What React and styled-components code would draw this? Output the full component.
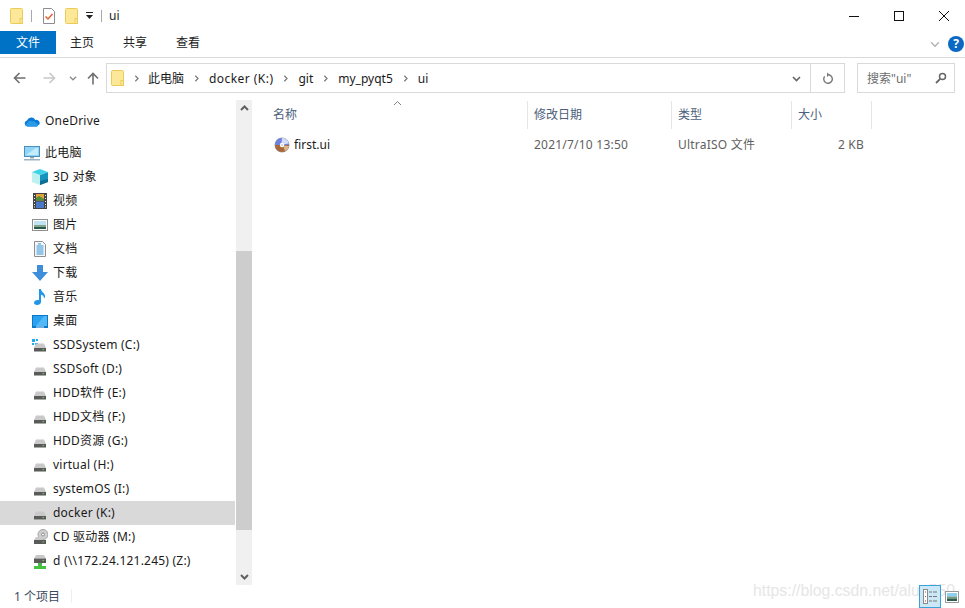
import React from "react";
import styled, { createGlobalStyle } from "styled-components";

const GlobalStyle = createGlobalStyle`
  html, body {
    margin: 0;
    padding: 0;
    background: #fff;
  }
  body {
    font-family: "Noto Sans", "Noto Sans CJK SC", sans-serif;
    font-size: 12px;
    color: #1a1a1a;
  }
`;

const Window = styled.div`
  width: 965px;
  height: 608px;
  display: flex;
  flex-direction: column;
  overflow: hidden;
  position: relative;
  background: #fff;
`;

const TitleBar = styled.div`
  height: 31px;
  display: flex;
  align-items: center;
  padding-left: 10px;
`;

const QuickIcon = styled.div`
  display: flex;
  margin-right: ${p => p.$gap || 0}px;
`;

const TitleSep = styled.div`
  width: 1px;
  height: 12px;
  background: #a8a8a8;
  margin-right: ${p => p.$gap}px;
`;

const TitleText = styled.span`
  font-size: 12px;
`;

const WinControls = styled.div`
  margin-left: auto;
  display: flex;
  align-items: center;
  padding-right: 16px;
  gap: 35px;
  height: 100%;
`;

const TabBar = styled.div`
  height: 26px;
  display: flex;
  align-items: flex-start;
  border-bottom: 1px solid #dadada;
`;

const Tab = styled.div`
  height: 23px;
  line-height: 24px;
  width: ${p => (p.$active ? 56 : 53)}px;
  padding-left: ${p => (p.$active ? 16 : 0)}px;
  box-sizing: border-box;
  background: ${p => (p.$active ? "#0072c6" : "transparent")};
  color: ${p => (p.$active ? "#fff" : "#222")};
  ${p => p.$first && "margin-left: 14px;"}
`;

const TabRight = styled.div`
  margin-left: auto;
  height: 26px;
  display: flex;
  align-items: center;
  gap: 8px;
  padding-right: 1px;
`;

const HelpIcon = styled.div`
  width: 16px;
  height: 16px;
  border-radius: 50%;
  background: #0b69c4;
  color: #fff;
  font-weight: 700;
  font-size: 12px;
  line-height: 16px;
  text-align: center;
`;

const AddressRow = styled.div`
  height: 30px;
  margin-top: 5px;
  display: flex;
  align-items: center;
  padding-right: 10px;
`;

const NavButtons = styled.div`
  width: 106px;
  height: 100%;
  flex: none;
  display: flex;
  align-items: center;
  padding-left: 13px;
  box-sizing: border-box;
`;

const NavBtn = styled.div`
  display: flex;
  margin-right: ${p => p.$gap}px;
`;

const AddressBox = styled.div`
  width: 739px;
  flex: none;
  height: 100%;
  box-sizing: border-box;
  border: 1px solid #d9d9d9;
  display: flex;
  align-items: center;
  padding-left: 4px;
`;

const Crumb = styled.span`
  margin-right: 9px;
  color: #1a1a1a;
  letter-spacing: ${p => (p.$wide ? 0.45 : 0)}px;
`;

const CrumbArrow = styled.span`
  display: flex;
  margin-right: ${p => (p.$first ? 8 : 9)}px;
`;

const AddressEnd = styled.div`
  margin-left: auto;
  display: flex;
  align-items: center;
  height: 100%;
`;

const DropBtn = styled.div`
  width: 27px;
  height: 100%;
  display: flex;
  align-items: center;
  justify-content: center;
`;

const RefreshBtn = styled.div`
  width: 34px;
  height: 100%;
  box-sizing: border-box;
  display: flex;
  align-items: center;
  justify-content: center;
  border-left: 1px solid #d9d9d9;
`;

const SearchBox = styled.div`
  width: 98px;
  height: 100%;
  margin-left: 12px;
  box-sizing: border-box;
  border: 1px solid #d9d9d9;
  display: flex;
  align-items: center;
  padding: 0 7px 0 9px;
  color: #6d6d6d;
  justify-content: space-between;
`;

const Main = styled.div`
  flex: 1;
  min-height: 0;
  margin-top: 7px;
  display: flex;
`;

const Sidebar = styled.div`
  width: 236px;
  flex: none;
  padding-top: 9px;
  box-sizing: border-box;
`;

const NavRow = styled.div`
  height: 24px;
  width: 235px;
  display: flex;
  align-items: center;
  box-sizing: border-box;
  padding-left: ${p => (p.$top ? 24 : 32)}px;
  margin-top: ${p => p.$gapTop || 0}px;
  background: ${p => (p.$selected ? "#d9d9d9" : "transparent")};
`;

const NavIcon = styled.div`
  width: 16px;
  height: 16px;
  display: flex;
  align-items: center;
  justify-content: center;
  margin-right: 5px;
  flex: none;
`;

const NavLabel = styled.span`
  padding-bottom: 2px;
  letter-spacing: 0.22px;
`;

const ScrollBar = styled.div`
  width: 16px;
  flex: none;
  background: #f0f0f0;
  display: flex;
  flex-direction: column;
`;

const ScrollBtn = styled.div`
  height: 17px;
  display: flex;
  align-items: center;
  justify-content: center;
  flex: none;
`;

const ScrollSpace = styled.div`
  height: ${p => p.$h}px;
  flex: none;
  background: ${p => (p.$thumb ? "#cdcdcd" : "transparent")};
`;

const Content = styled.div`
  flex: 1;
  min-width: 0;
  display: flex;
  flex-direction: column;
  padding: 1px 0 0 15px;
`;

const HeaderRow = styled.div`
  height: 28px;
  display: flex;
  position: relative;
`;

const SortCaret = styled.div`
  position: absolute;
  left: 126px;
  top: -2px;
  display: flex;
`;

const HeaderCell = styled.div`
  width: ${p => p.$w}px;
  box-sizing: border-box;
  padding-left: ${p => p.$pad ?? 6}px;
  line-height: 28px;
  color: #4c607a;
  border-right: 1px solid #e5e5e5;
  flex: none;
`;

const FileRow = styled.div`
  height: 24px;
  margin-top: 4px;
  display: flex;
  align-items: center;
`;

const FileName = styled.div`
  width: 261px;
  flex: none;
  display: flex;
  align-items: center;
  gap: 4px;
  padding-left: 7px;
  box-sizing: border-box;
  color: #1a1a1a;
`;

const FileText = styled.span`
  padding-bottom: 2px;
`;

const FileCell = styled.div`
  flex: none;
  width: ${p => p.$w}px;
  box-sizing: border-box;
  padding-left: ${p => p.$pad ?? 6}px;
  padding-bottom: 2px;
  letter-spacing: 0.22px;
  text-align: ${p => p.$align || "left"};
  color: #5f5f5f;
`;

const StatusBar = styled.div`
  height: 23px;
  box-sizing: border-box;
  padding: 0 0 2px 14px;
  display: flex;
  align-items: center;
  color: #3c4b5e;
`;

const StatusSep = styled.div`
  width: 1px;
  height: 14px;
  background: #efefef;
  margin-left: 11px;
`;

const Watermark = styled.div`
  position: absolute;
  right: 10px;
  bottom: 8px;
  font-family: "Liberation Sans", sans-serif;
  font-size: 15.8px;
  color: #e6e6e6;
  white-space: nowrap;
`;

const ViewSwitch = styled.div`
  position: absolute;
  right: 6px;
  bottom: 0;
  display: flex;
  align-items: center;
  gap: 4px;
`;

const ActiveView = styled.div`
  width: 22px;
  height: 23px;
  box-sizing: border-box;
  background: #cce8f7;
  border: 1px solid #3ba1d9;
  display: flex;
  align-items: center;
  justify-content: center;
`;

const Folder = () => (
  <svg width="13" height="16" viewBox="0 0 13 16">
    <rect x="0.5" y="0.5" width="12" height="15" rx="1" fill="#fde89a" stroke="#eccb57" />
    <rect x="10" y="10.500" width="2.500" height="5" fill="#fde89a" stroke="#eccb57" />
  </svg>
);

const TaskIcon = () => (
  <svg width="12" height="16" viewBox="0 0 12 16">
    <path d="M.5.5h8l3 3v12H.5z" fill="#fff" stroke="#8d8d8d" />
    <path d="M2.500 8.500l2.500 2.500 4.500-5" fill="none" stroke="#e8602c" strokeWidth="1.5" />
  </svg>
);

const QuickDrop = () => (
  <svg width="9" height="9" viewBox="0 0 9 9">
    <rect x="1" y="1" width="7" height="1" fill="#222" />
    <path d="M1 4h7L4.500 8z" fill="#222" />
  </svg>
);

const Minimize = () => (
  <svg width="10" height="10" viewBox="0 0 10 10">
    <rect y="5" width="10" height="1" fill="#111" />
  </svg>
);

const Maximize = () => (
  <svg width="10" height="10" viewBox="0 0 10 10">
    <rect x="0.5" y="0.5" width="9" height="9" fill="none" stroke="#111" />
  </svg>
);

const CloseX = () => (
  <svg width="10" height="10" viewBox="0 0 10 10">
    <path d="M0 0l10 10M10 0L0 10" stroke="#111" strokeWidth="1" />
  </svg>
);

const Chevron = ({ dir = "down", color = "#777", w = 1.5, size = 9 }) => (
  <svg width={size} height={size} viewBox="0 0 9 9">
    <path
      d={dir === "down" ? "M1 3l3.500 3.500L8 3" : dir === "up" ? "M1 6l3.500-3.500L8 6" : "M3 1l3.500 3.500L3 8"}
      fill="none"
      stroke={color}
      strokeWidth={w}
    />
  </svg>
);

const ArrowLeft = ({ color }) => (
  <svg width="13" height="12" viewBox="0 0 13 12">
    <path d="M12.500 6H2M6.500 1L1.500 6l5 5" fill="none" stroke={color} strokeWidth="1.6" />
  </svg>
);

const ArrowRight = ({ color }) => (
  <svg width="13" height="12" viewBox="0 0 13 12">
    <path d="M.5 6H11M6.500 1l5 5-5 5" fill="none" stroke={color} strokeWidth="1.6" />
  </svg>
);

const ArrowUp = ({ color }) => (
  <svg width="12" height="13" viewBox="0 0 12 13">
    <path d="M6 12.500V2M1 6.500l5-5 5 5" fill="none" stroke={color} strokeWidth="1.6" />
  </svg>
);

const Refresh = () => (
  <svg width="12" height="13" viewBox="0 0 12 13">
    <path d="M7 2.800A4.300 4.300 0 1 1 2.600 4.400" fill="none" stroke="#777" strokeWidth="1.4" />
    <path d="M5 .5l2.600 2.300L5 5z" fill="#777" />
  </svg>
);

const SearchGlass = () => (
  <svg width="12" height="12" viewBox="0 0 12 12">
    <circle cx="7.500" cy="4.500" r="3" fill="none" stroke="#666" strokeWidth="1.5" />
    <path d="M5.200 6.800L1 11" stroke="#666" strokeWidth="1.8" />
  </svg>
);

const OneDriveIcon = () => (
  <svg width="16" height="11" viewBox="0 0 16 11">
    <path d="M3.500 10.500A3 3 0 0 1 3 4.600 4.500 4.500 0 0 1 11.300 4 3.400 3.400 0 0 1 15.600 8L13 10.500z" fill="#0a78d4" />
    <path d="M3.500 10.500A1.800 1.800 0 0 1 3.400 7 3 3 0 0 1 8.400 5.600 2.300 2.300 0 0 1 12 7.300a1.700 1.700 0 0 1 1 3.200z" fill="#2b9be8" />
  </svg>
);

const ComputerIcon = () => (
  <svg width="16" height="15" viewBox="0 0 16 15">
    <rect x="0.5" y="0.5" width="15" height="10" fill="#8fd5f8" stroke="#4d8fb8" />
    <path d="M2 9L12 2h2v7z" fill="#c4ecfc" />
    <rect x="6" y="11" width="4" height="1.500" fill="#9aa8b3" />
    <rect x="0" y="13" width="16" height="1.500" fill="#9db3c3" />
  </svg>
);

const CubeIcon = () => (
  <svg width="16" height="16" viewBox="0 0 16 16">
    <path d="M8 6l8-3v10l-8 3z" fill="#1595bd" />
    <path d="M8 6L0 3v10l8 3z" fill="#bdf0ee" />
    <path d="M8 0l8 3-8 3-8-3z" fill="#3fd2e6" />
    <path d="M8 16l8-3v-3l-8 2z" fill="#0e6f96" />
  </svg>
);

const FilmIcon = () => (
  <svg width="14" height="16" viewBox="0 0 14 16">
    <rect width="14" height="16" fill="#444" />
    <rect x="3" y="1" width="8" height="6.500" fill="#e0a23c" />
    <rect x="3" y="8.500" width="8" height="6.500" fill="#4a79c9" />
    <path d="M3 5l3-2 5 3v1.500H3z" fill="#4f8f3b" />
    <path d="M1 2h1v1H1zM1 5h1v1H1zM1 8h1v1H1zM1 11h1v1H1zM1 13.500h1v1H1zM12 2h1v1h-1zM12 5h1v1h-1zM12 8h1v1h-1zM12 11h1v1h-1zM12 13.500h1v1h-1z" fill="#eee" />
  </svg>
);

const PictureIcon = () => (
  <svg width="16" height="12" viewBox="0 0 16 12">
    <rect x="0.5" y="0.5" width="15" height="11" fill="#fff" stroke="#8f8f8f" />
    <rect x="2" y="2" width="12" height="4" fill="#bfe2f4" />
    <rect x="2" y="6" width="12" height="2" fill="#7fa58d" />
    <rect x="2" y="8" width="12" height="2" fill="#2c5a46" />
  </svg>
);

const DocIcon = () => (
  <svg width="12" height="16" viewBox="0 0 12 16">
    <path d="M.5.5h8l3 3v12H.5z" fill="#f6f6f6" stroke="#8f8f8f" />
    <path d="M4 3h3M2.500 5h7M2.500 7h7M2.500 9h7M2.500 11h7M2.500 13h7" stroke="#2e95dc" strokeWidth="1" />
  </svg>
);

const DownloadIcon = () => (
  <svg width="16" height="16" viewBox="0 0 16 16">
    <path d="M5 0h6v7h5l-8 9-8-9h5z" fill="#3f8edb" />
  </svg>
);

const MusicIcon = () => (
  <svg width="12" height="16" viewBox="0 0 12 16">
    <path d="M5 0h2c0 3 4 3.500 4 7.500 0 1-.5 1.500-1 2 0-3-2-3.500-3-4V13c0 2-2 3-4 3s-3-1-3-2.200C0 12 2.500 10.500 5 11.200z" fill="#1e97e8" />
  </svg>
);

const DesktopIcon = () => (
  <svg width="16" height="13" viewBox="0 0 16 13">
    <rect width="16" height="13" fill="#0a78c8" />
    <rect x="1" y="1" width="14" height="10" fill="#2aa0f0" />
    <path d="M4 11l8-10h3v10z" fill="#52b8f6" />
    <rect x="4" y="11.500" width="8" height="1" fill="#cdeafb" />
  </svg>
);

const DriveIcon = ({ sys }) => (
  <svg width="16" height="16" viewBox="0 0 16 16">
    {sys && <path d="M0 2h3v3H0zM4 2h2v2H4zM0 6h2v2H0zM3 6h3v2H3z" fill="#1faaf0" />}
    <path d="M4 6.500h8l2 4.500H2z" fill="#c9c9c9" />
    <path d="M2 11h12v3.500H2z" fill="#5a5a5a" />
    <rect x="2" y="14.500" width="12" height="0.500" fill="#a8a8a8" />
    <rect x="10.500" y="12" width="1.500" height="1" fill="#69d04e" />
  </svg>
);

const CdIcon = () => (
  <svg width="16" height="16" viewBox="0 0 16 16">
    <circle cx="11" cy="5.500" r="5" fill="#d0d0d0" stroke="#a2a2a2" />
    <circle cx="11" cy="5.500" r="1.500" fill="#fff" stroke="#8a8a8a" />
    <path d="M4 8h5l2 3H2z" fill="#c9c9c9" />
    <path d="M2 11h12v4H2z" fill="#5a5a5a" />
    <rect x="10.500" y="12.500" width="1.500" height="1" fill="#69d04e" />
  </svg>
);

const NetDriveIcon = () => (
  <svg width="16" height="16" viewBox="0 0 16 16">
    <path d="M4 2h8l2 3.500H2z" fill="#c9c9c9" />
    <path d="M2 5.500h12V10H2z" fill="#5a5a5a" />
    <rect x="10.500" y="7" width="1.500" height="1" fill="#69d04e" />
    <rect x="6" y="10" width="4" height="3" fill="#4cb648" />
    <rect x="2" y="13" width="12" height="3" fill="#45c23f" />
  </svg>
);

const DiscIcon = () => (
  <svg width="16" height="16" viewBox="0 0 16 16">
    <circle cx="8" cy="8" r="7.500" fill="#a0a0a0" />
    <path d="M1 8a7 7 0 0 1 14 0z" fill="#6f80e4" />
    <path d="M8 1a7 7 0 0 1 6.800 5.500L9 7.500 7.500 6z" fill="#d3dcf7" />
    <path d="M1 8a7 7 0 0 0 14 0z" fill="#a9683a" />
    <path d="M9 8.500l6 .5a7 7 0 0 1-4 5.300z" fill="#dcb48c" />
    <circle cx="8" cy="8" r="2.200" fill="#fff" />
    <circle cx="8" cy="8" r="0.800" fill="#aaa" />
  </svg>
);

const DetailsView = () => (
  <svg width="15" height="15" viewBox="0 0 15 15">
    <rect x="0.500" y="0.500" width="4" height="14" fill="#fff" stroke="#8a8a8a" />
    <rect x="2" y="2.500" width="1" height="1" fill="#666" />
    <rect x="2" y="7" width="1" height="1" fill="#666" />
    <rect x="2" y="11.500" width="1" height="1" fill="#c2302e" />
    <path d="M6 3h3M10 3h4M6 7.500h3M10 7.500h4M6 12h3M10 12h4" stroke="#777" />
  </svg>
);

const LargeView = () => (
  <svg width="14" height="12" viewBox="0 0 14 12">
    <rect x="0.500" y="0.500" width="13" height="11" fill="#fff" stroke="#9a9a9a" />
    <rect x="2" y="2" width="10" height="3.500" fill="#8fd0ee" />
    <rect x="2" y="5.500" width="10" height="2" fill="#6e9c88" />
    <rect x="2" y="7.500" width="10" height="2.500" fill="#2f5c49" />
  </svg>
);

const drives = [
  { icon: <DriveIcon sys />, label: "SSDSystem (C:)" },
  { icon: <DriveIcon />, label: "SSDSoft (D:)" },
  { icon: <DriveIcon />, label: "HDD软件 (E:)" },
  { icon: <DriveIcon />, label: "HDD文档 (F:)" },
  { icon: <DriveIcon />, label: "HDD资源 (G:)" },
  { icon: <DriveIcon />, label: "virtual (H:)" },
  { icon: <DriveIcon />, label: "systemOS (I:)" },
  { icon: <DriveIcon />, label: "docker (K:)", selected: true },
  { icon: <CdIcon />, label: "CD 驱动器 (M:)" },
  { icon: <NetDriveIcon />, label: "d (\\\\172.24.121.245) (Z:)" },
];

const folders = [
  { icon: <CubeIcon />, label: "3D 对象" },
  { icon: <FilmIcon />, label: "视频" },
  { icon: <PictureIcon />, label: "图片" },
  { icon: <DocIcon />, label: "文档" },
  { icon: <DownloadIcon />, label: "下载" },
  { icon: <MusicIcon />, label: "音乐" },
  { icon: <DesktopIcon />, label: "桌面" },
];

const crumbs = ["此电脑", "docker (K:)", "git", "my_pyqt5", "ui"];

export default function App() {
  return (
    <Window>
      <GlobalStyle />
      <TitleBar>
        <QuickIcon $gap={8}><Folder /></QuickIcon>
        <TitleSep $gap={11} />
        <QuickIcon $gap={10}><TaskIcon /></QuickIcon>
        <QuickIcon $gap={7}><Folder /></QuickIcon>
        <QuickIcon $gap={7}><QuickDrop /></QuickIcon>
        <TitleSep $gap={7} />
        <TitleText>ui</TitleText>
        <WinControls>
          <Minimize />
          <Maximize />
          <CloseX />
        </WinControls>
      </TitleBar>

      <TabBar>
        <Tab $active>文件</Tab>
        <Tab $first>主页</Tab>
        <Tab>共享</Tab>
        <Tab>查看</Tab>
        <TabRight>
          <Chevron color="#b0b0b0" w={1.2} size={10} />
          <HelpIcon>?</HelpIcon>
        </TabRight>
      </TabBar>

      <AddressRow>
        <NavButtons>
          <NavBtn $gap={17}><ArrowLeft color="#6f6f6f" /></NavBtn>
          <NavBtn $gap={13}><ArrowRight color="#c8c8c8" /></NavBtn>
          <NavBtn $gap={10}><Chevron color="#8c8c8c" size={8} /></NavBtn>
          <NavBtn $gap={0}><ArrowUp color="#6f6f6f" /></NavBtn>
        </NavButtons>
        <AddressBox>
          <NavBtn $gap={9}><Folder /></NavBtn>
          {crumbs.map((c, i) => (
            <React.Fragment key={c}>
              <CrumbArrow $first={i === 0}><Chevron dir="right" size={7} color="#777" /></CrumbArrow>
              <Crumb $wide={i === 1}>{c}</Crumb>
            </React.Fragment>
          ))}
          <AddressEnd>
            <DropBtn><Chevron color="#666" w={1.6} /></DropBtn>
            <RefreshBtn><Refresh /></RefreshBtn>
          </AddressEnd>
        </AddressBox>
        <SearchBox>
          <span>搜索"ui"</span>
          <SearchGlass />
        </SearchBox>
      </AddressRow>

      <Main>
        <Sidebar>
          <NavRow $top>
            <NavIcon><OneDriveIcon /></NavIcon>
            <NavLabel>OneDrive</NavLabel>
          </NavRow>
          <NavRow $top $gapTop={8}>
            <NavIcon><ComputerIcon /></NavIcon>
            <NavLabel>此电脑</NavLabel>
          </NavRow>
          {folders.map(f => (
            <NavRow key={f.label}>
              <NavIcon>{f.icon}</NavIcon>
              <NavLabel>{f.label}</NavLabel>
            </NavRow>
          ))}
          {drives.map(d => (
            <NavRow key={d.label} $selected={d.selected}>
              <NavIcon>{d.icon}</NavIcon>
              <NavLabel>{d.label}</NavLabel>
            </NavRow>
          ))}
        </Sidebar>
        <ScrollBar>
          <ScrollBtn><Chevron dir="up" color="#606060" w={2} /></ScrollBtn>
          <ScrollSpace $h={134} />
          <ScrollSpace $thumb $h={279} />
          <ScrollSpace $h={38} />
          <ScrollBtn><Chevron color="#606060" w={2} /></ScrollBtn>
        </ScrollBar>
        <Content>
          <HeaderRow>
            <SortCaret><Chevron dir="up" color="#808080" w={1} /></SortCaret>
            <HeaderCell $w={261} $pad={6}>名称</HeaderCell>
            <HeaderCell $w={144}>修改日期</HeaderCell>
            <HeaderCell $w={120}>类型</HeaderCell>
            <HeaderCell $w={80}>大小</HeaderCell>
          </HeaderRow>
          <FileRow>
            <FileName><DiscIcon /><FileText>first.ui</FileText></FileName>
            <FileCell $w={144}>2021/7/10 13:50</FileCell>
            <FileCell $w={120}>UltraISO 文件</FileCell>
            <FileCell $w={72} $pad={0} $align="right">2 KB</FileCell>
          </FileRow>
        </Content>
      </Main>

      <StatusBar>
        1 个项目
        <StatusSep />
      </StatusBar>
      <Watermark>https://blog.csdn.net/alue550</Watermark>
      <ViewSwitch>
        <ActiveView><DetailsView /></ActiveView>
        <LargeView />
      </ViewSwitch>
    </Window>
  );
}
